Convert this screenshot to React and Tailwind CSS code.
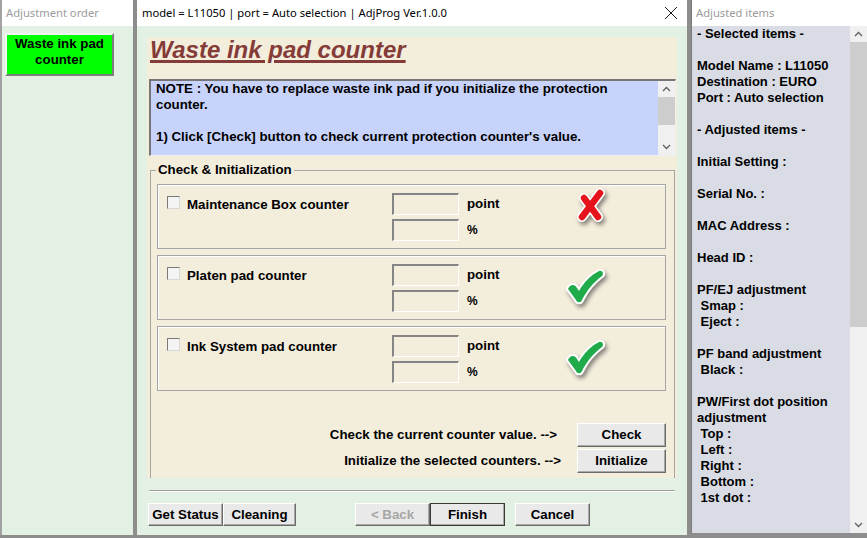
import React from 'react';

const raised =
  'bg-[#e9e9e9] border border-t-white border-l-white border-r-[#6b6b6b] border-b-[#6b6b6b] shadow-[inset_-1px_-1px_0_#a8a8a8] text-[13.3px] font-bold leading-none flex items-center justify-center';

function Chevron({ down }) {
  return (
    <svg width="9" height="6" viewBox="0 0 9 6" className="text-[#606060]">
      <polyline
        points={down ? '1,1 4.5,4.5 8,1' : '1,5 4.5,1.5 8,5'}
        fill="none"
        stroke="currentColor"
        strokeWidth="1.3"
      />
    </svg>
  );
}

function CloseGlyph() {
  return (
    <svg width="14" height="14" viewBox="0 0 14 14">
      <path d="M1 1 L13 13 M13 1 L1 13" stroke="#1a1a1a" strokeWidth="1" />
    </svg>
  );
}

function RedCross() {
  return (
    <svg width="32" height="36" viewBox="0 0 32 36" className="drop-shadow-[2px_3px_2px_rgba(0,0,0,0.45)]">
      <g strokeLinecap="round" fill="none">
        <path d="M9 10 L23 29" stroke="white" strokeWidth="10" />
        <path d="M25 5 L7 29" stroke="white" strokeWidth="10" />
        <path d="M9 10 L23 29" stroke="#e5131b" strokeWidth="6.5" />
        <path d="M25 5 L7 29" stroke="#e5131b" strokeWidth="6.5" />
      </g>
    </svg>
  );
}

function GreenCheck() {
  return (
    <svg width="40" height="36" viewBox="0 0 40 36" className="drop-shadow-[2px_3px_2px_rgba(0,0,0,0.45)]">
      <path
        d="M3 20 C5 15 10 15 12 19 L14 22 C19 13 26 6 34 2 C38 1 39 5 37 7 C29 13 22 21 17 31 C16 34 12 34 11 31 Z"
        fill="#1fab49"
        stroke="white"
        strokeWidth="4"
        paintOrder="stroke"
        strokeLinejoin="round"
      />
    </svg>
  );
}

function CounterRow({ label, ok, iconClass }) {
  return (
    <div className="h-[65px] flex border border-[#a5a5a5] shadow-[inset_1px_1px_0_#ffffff]">
      <div className="mt-[11px] ml-[9px] w-[13px] h-[13px] bg-[#f4f4f4] border border-t-[#7a7a7a] border-l-[#7a7a7a] border-r-[#d8d8d8] border-b-[#d8d8d8]" />
      <div className="ml-[7px] mt-[12px] w-[205px] text-[13.3px] font-bold leading-4">{label}</div>
      <div className="w-[135px] mt-[8px] flex flex-col gap-[4px]">
        {['point', '%'].map((unit) => (
          <div key={unit} className="flex items-center">
            <div className="w-[67px] h-[22px] border-t-2 border-l-2 border-b border-r border-t-[#858585] border-l-[#858585] border-b-white border-r-white" />
            <span className={`ml-[8px] font-bold leading-4 ${unit === '%' ? 'text-[12px]' : 'text-[13.3px]'}`}>{unit}</span>
          </div>
        ))}
      </div>
      <div className={iconClass}>{ok ? <GreenCheck /> : <RedCross />}</div>
    </div>
  );
}

const adjusted = [
  '- Selected items -', '', 'Model Name : L11050', 'Destination : EURO', 'Port : Auto selection', '',
  '- Adjusted items -', '', 'Initial Setting :', '', 'Serial No. :', '', 'MAC Address :', '', 'Head ID :', '',
  'PF/EJ adjustment', '\u00a0Smap :', '\u00a0Eject :', '', 'PF band adjustment', '\u00a0Black :', '',
  'PW/First dot position', 'adjustment', '\u00a0Top :', '\u00a0Left :', '\u00a0Right :', '\u00a0Bottom :', '\u00a01st dot :',
];

export default function App() {
  return (
    <div className="w-[867px] h-[538px] bg-[#8d8d8d] flex gap-[4px] overflow-hidden text-black font-['Liberation_Sans',Arial,sans-serif]">
      {/* Adjustment order */}
      <div className="w-[133px] h-[535px] flex flex-col border-l-2 border-[#a2a2a2]">
        <div className="h-[26px] bg-white flex items-center pl-[4px] text-[11.2px] text-[#9b9b9b] font-['Noto_Sans',sans-serif]">
          Adjustment order
        </div>
        <div className="flex-1 bg-[#e2f1e3] pt-[7px] pl-[3px]">
          <div className="w-[109px] h-[43px] bg-[#00ff00] border-2 border-t-[#f2f2f2] border-l-[#f2f2f2] border-r-[#7d7d7d] border-b-[#7d7d7d] pt-[1px] text-center text-[13.3px] font-bold leading-4">
            Waste ink pad
            <br />
            counter
          </div>
        </div>
      </div>

      {/* Main dialog */}
      <div className="w-[550px] h-[535px] flex flex-col">
        <div className="h-[26px] bg-white flex items-center justify-between pl-[5px] pr-[9px] text-[11.2px] font-['Noto_Sans',sans-serif]">
          <span>model = L11050 | port = Auto selection | AdjProg Ver.1.0.0</span>
          <CloseGlyph />
        </div>
        <div className="flex-1 bg-[#e2f1e3] flex flex-col pt-[11px]">
          <div className="ml-[10px] w-[530px] h-[441px] bg-[#f3eddc] overflow-hidden">
            <div className="pl-[3px] h-[26px] leading-[26px] text-[24px] font-bold italic text-[#853c38] underline decoration-[3px] underline-offset-[2px]">
              Waste ink pad counter
            </div>

            {/* Note */}
            <div className="mt-[16px] ml-[2px] w-[527px] h-[77px] bg-[#c8d3fb] flex border-t-2 border-l-2 border-b border-r border-t-[#767676] border-l-[#767676] border-b-[#f0f0f0] border-r-[#f0f0f0]">
              <div className="flex-1 px-[5px] text-[13.3px] font-bold leading-4">
                NOTE : You have to replace waste ink pad if you initialize the protection
                <br />
                counter.
                <br />
                <br />
                1) Click [Check] button to check current protection counter's value.
              </div>
              <div className="w-[17px] bg-[#f0f0f0] flex flex-col items-center">
                <div className="h-[16px] flex items-center justify-center"><Chevron /></div>
                <div className="w-full h-[28px] bg-[#cdcdcd]" />
                <div className="flex-1" />
                <div className="h-[16px] flex items-center justify-center"><Chevron down /></div>
              </div>
            </div>

            {/* Check & Initialization */}
            <fieldset className="mt-[6px] ml-[3px] w-[525px] border border-[#a5a5a5] pb-[12px]">
              <legend className="ml-[5px] px-[2px] text-[13.3px] font-bold leading-4">Check &amp; Initialization</legend>
              <div className="pl-[6px] pr-[8px] pt-[6px] flex flex-col">
                <div className="flex flex-col gap-[6px]">
                  <CounterRow label="Maintenance Box counter" ok={false} iconClass="ml-[48px] mt-[3px]" />
                  <CounterRow label="Platen pad counter" ok iconClass="ml-[38px] mt-[13px]" />
                  <CounterRow label="Ink System pad counter" ok iconClass="ml-[38px] mt-[13px]" />
                </div>
                <div className="mt-[32px] flex justify-end items-center text-[13.3px] font-bold">
                  <span className="mr-[20px]">Check the current counter value. --&gt;</span>
                  <div className={`${raised} w-[89px] h-[24px]`}>Check</div>
                </div>
                <div className="mt-[2px] flex justify-end items-center text-[13.3px] font-bold">
                  <span className="mr-[16px]">Initialize the selected counters. --&gt;</span>
                  <div className={`${raised} w-[89px] h-[24px]`}>Initialize</div>
                </div>
              </div>
            </fieldset>
          </div>

          <div className="mt-[12px] ml-[12px] w-[526px] border-t border-b border-t-[#a0a0a0] border-b-white" />

          <div className="mt-[11px] ml-[11px] flex">
            <div className={`${raised} w-[75px] h-[23px]`}>Get Status</div>
            <div className={`${raised} w-[73px] h-[23px]`}>Cleaning</div>
            <div className={`${raised} ml-[59px] w-[75px] h-[23px] text-[#a6a6a6]`}>&lt; Back</div>
            <div className={`${raised} w-[75px] h-[23px] outline outline-1 outline-[#3a3a3a] -outline-offset-1`}>Finish</div>
            <div className={`${raised} ml-[10px] w-[75px] h-[23px]`}>Cancel</div>
          </div>
        </div>
      </div>

      {/* Adjusted items */}
      <div className="w-[176px] h-[533px] flex flex-col border-l border-[#7b7b7b]">
        <div className="h-[26px] bg-white flex items-center pl-[4px] text-[11.2px] text-[#9b9b9b] font-['Noto_Sans',sans-serif]">
          Adjusted items
        </div>
        <div className="flex-1 flex bg-[#d9dce4] overflow-hidden">
          <div className="flex-1 pl-[5px] text-[13px] font-bold leading-4 whitespace-pre">
            {adjusted.map((line, i) => (
              <div key={i} className="h-[16px]">{line}</div>
            ))}
          </div>
          <div className="w-[17px] bg-[#f0f0f0] flex flex-col">
            <div className="h-[16px] flex items-center justify-center"><Chevron /></div>
            <div className="h-[285px] bg-[#cdcdcd]" />
            <div className="flex-1" />
            <div className="h-[16px] flex items-center justify-center"><Chevron down /></div>
          </div>
        </div>
      </div>
    </div>
  );
}
